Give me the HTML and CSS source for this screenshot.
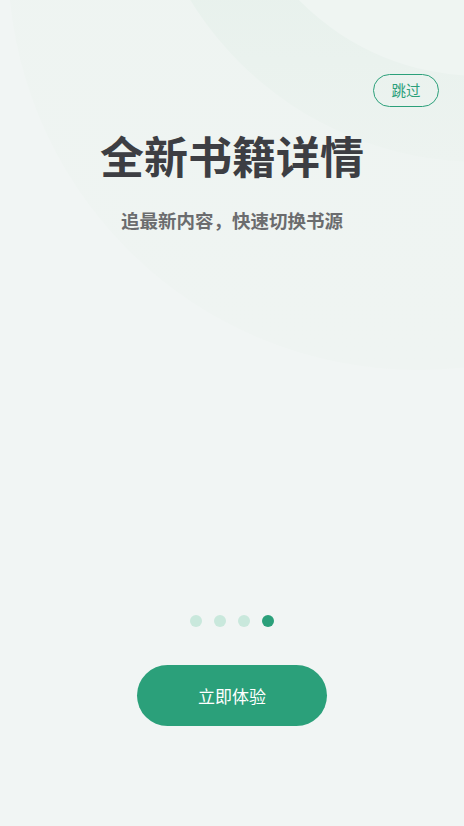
FILE: index.html
```html
<!DOCTYPE html>
<html lang="zh-CN">
<head>
<meta charset="utf-8">
<title>全新书籍详情</title>
<link rel="stylesheet" href="styles.css">
</head>
<body>
<div class="page">
  <div class="deco deco-big"></div>
  <div class="deco deco-ring"></div>
  <div class="deco deco-inner"></div>
  <div class="content">
    <div class="topbar">
      <button class="skip">跳过</button>
    </div>
    <h1 class="title">全新书籍详情</h1>
    <p class="subtitle">追最新内容，快速切换书源</p>
    <div class="spacer"></div>
    <div class="dots">
      <span class="dot"></span>
      <span class="dot"></span>
      <span class="dot"></span>
      <span class="dot active"></span>
    </div>
    <button class="cta">立即体验</button>
  </div>
</div>
</body>
</html>
```
FILE: styles.css
```css
* { box-sizing: border-box; }
html, body {
  margin: 0;
  padding: 0;
  background: #f1f5f4;
}
body {
  font-family: "Noto Sans CJK SC", "Noto Sans", sans-serif;
}
.page {
  position: relative;
  width: 464px;
  height: 826px;
  overflow: hidden;
  background: #f1f5f4;
}
.deco {
  position: absolute;
  border-radius: 50%;
  pointer-events: none;
}
.deco-big {
  left: 8px;
  top: -450px;
  width: 820px;
  height: 820px;
  background: linear-gradient(180deg, #eef4f1 0%, #eff4f2 100%);
}
.deco-ring {
  left: 140px;
  top: -518px;
  width: 680px;
  height: 680px;
  background: linear-gradient(180deg, #e7f1ec 70%, #edf3f0 100%);
}
.deco-inner {
  left: 226px;
  top: -432px;
  width: 508px;
  height: 508px;
  background: #eff5f2;
}
.content {
  position: relative;
  z-index: 1;
  height: 826px;
  display: flex;
  flex-direction: column;
  align-items: center;
}
.topbar {
  align-self: stretch;
  display: flex;
  justify-content: flex-end;
  padding: 74px 25px 0 0;
}
.skip {
  width: 66px;
  height: 33px;
  border: 1.5px solid #2ba07a;
  border-radius: 17px;
  background: transparent;
  color: #2ba07a;
  font-family: inherit;
  font-size: 14.5px;
  font-weight: 400;
  line-height: 1;
  padding: 0;
}
.title {
  margin: 26px 0 0;
  font-size: 44px;
  line-height: 44px;
  font-weight: 700;
  color: #3d3e43;
  letter-spacing: 0;
}
.subtitle {
  margin: 34px 0 0;
  font-size: 18.5px;
  line-height: 18px;
  font-weight: 700;
  color: #6b6c6e;
}
.spacer { flex: 1; }
.dots {
  display: flex;
  gap: 12px;
}
.dot {
  width: 12px;
  height: 12px;
  border-radius: 50%;
  background: #c9e8dc;
}
.dot.active { background: #2ba07a; }
.cta {
  margin: 38px 0 100px;
  width: 190px;
  height: 61px;
  border: none;
  border-radius: 31px;
  background: #2ba07a;
  color: #ffffff;
  font-family: inherit;
  font-size: 17px;
  padding: 0;
}
```
